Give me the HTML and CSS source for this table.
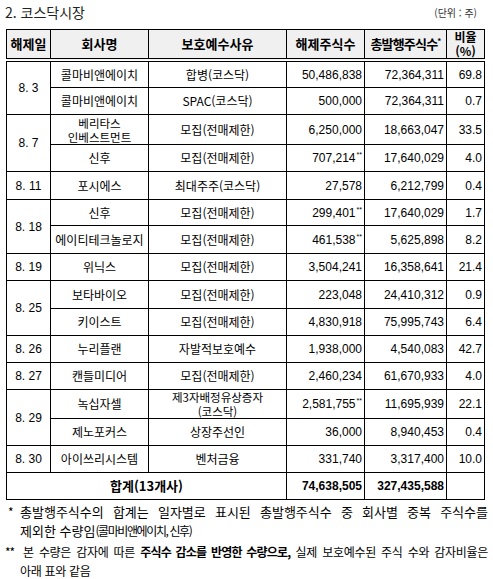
FILE: index.html
```html
<!DOCTYPE html>
<html lang="ko">
<head>
<meta charset="utf-8">
<title>코스닥시장</title>
<link rel="stylesheet" href="styles.css">
</head>
<body>
<div class="page">
  <div class="top">
    <div class="title">2. 코스닥시장</div>
    <div class="unit">(단위 : 주)</div>
  </div>
  <table class="grid">
    <colgroup>
      <col class="c1"><col class="c2"><col class="c3"><col class="c4"><col class="c5"><col class="c6">
    </colgroup>
    <thead>
      <tr class="hrow">
        <th>해제일</th>
        <th>회사명</th>
        <th>보호예수사유</th>
        <th>해제주식수</th>
        <th class="narrow">총발행주식수<sup class="star">*</sup></th>
        <th class="two"><span class="ln">비율</span><span class="ln">(%)</span></th>
      </tr>
    </thead>
    <tbody>
      <tr class="h26">
        <td class="date" rowspan="2">8. 3</td>
        <td class="kr">콜마비앤에이치</td>
        <td class="kr">합병(코스닥)</td>
        <td class="num">50,486,838</td>
        <td class="num">72,364,311</td>
        <td class="num">69.8</td>
      </tr>
      <tr class="h27">
        <td class="kr">콜마비앤에이치</td>
        <td class="kr">SPAC(코스닥)</td>
        <td class="num">500,000</td>
        <td class="num">72,364,311</td>
        <td class="num">0.7</td>
      </tr>
      <tr class="h30">
        <td class="date" rowspan="2">8. 7</td>
        <td class="kr two"><span class="ln">베리타스</span><span class="ln">인베스트먼트</span></td>
        <td class="kr">모집(전매제한)</td>
        <td class="num">6,250,000</td>
        <td class="num">18,663,047</td>
        <td class="num">33.5</td>
      </tr>
      <tr class="h27">
        <td class="kr">신후</td>
        <td class="kr">모집(전매제한)</td>
        <td class="num">707,214<sup class="ast">**</sup></td>
        <td class="num">17,640,029</td>
        <td class="num">4.0</td>
      </tr>
      <tr class="h28">
        <td class="date">8. 11</td>
        <td class="kr">포시에스</td>
        <td class="kr">최대주주(코스닥)</td>
        <td class="num">27,578</td>
        <td class="num">6,212,799</td>
        <td class="num">0.4</td>
      </tr>
      <tr class="h26">
        <td class="date" rowspan="2">8. 18</td>
        <td class="kr">신후</td>
        <td class="kr">모집(전매제한)</td>
        <td class="num">299,401<sup class="ast">**</sup></td>
        <td class="num">17,640,029</td>
        <td class="num">1.7</td>
      </tr>
      <tr class="h28">
        <td class="kr">에이티테크놀로지</td>
        <td class="kr">모집(전매제한)</td>
        <td class="num">461,538<sup class="ast">**</sup></td>
        <td class="num">5,625,898</td>
        <td class="num">8.2</td>
      </tr>
      <tr class="h27">
        <td class="date">8. 19</td>
        <td class="kr">위닉스</td>
        <td class="kr">모집(전매제한)</td>
        <td class="num">3,504,241</td>
        <td class="num">16,358,641</td>
        <td class="num">21.4</td>
      </tr>
      <tr class="h28">
        <td class="date" rowspan="2">8. 25</td>
        <td class="kr">보타바이오</td>
        <td class="kr">모집(전매제한)</td>
        <td class="num">223,048</td>
        <td class="num">24,410,312</td>
        <td class="num">0.9</td>
      </tr>
      <tr class="h27">
        <td class="kr">키이스트</td>
        <td class="kr">모집(전매제한)</td>
        <td class="num">4,830,918</td>
        <td class="num">75,995,743</td>
        <td class="num">6.4</td>
      </tr>
      <tr class="h27">
        <td class="date">8. 26</td>
        <td class="kr">누리플랜</td>
        <td class="kr">자발적보호예수</td>
        <td class="num">1,938,000</td>
        <td class="num">4,540,083</td>
        <td class="num">42.7</td>
      </tr>
      <tr class="h27">
        <td class="date">8. 27</td>
        <td class="kr">캔들미디어</td>
        <td class="kr">모집(전매제한)</td>
        <td class="num">2,460,234</td>
        <td class="num">61,670,933</td>
        <td class="num">4.0</td>
      </tr>
      <tr class="h28">
        <td class="date" rowspan="2">8. 29</td>
        <td class="kr">녹십자셀</td>
        <td class="kr two"><span class="ln">제3자배정유상증자</span><span class="ln">(코스닥)</span></td>
        <td class="num">2,581,755<sup class="ast">**</sup></td>
        <td class="num">11,695,939</td>
        <td class="num">22.1</td>
      </tr>
      <tr class="h27">
        <td class="kr">제노포커스</td>
        <td class="kr">상장주선인</td>
        <td class="num">36,000</td>
        <td class="num">8,940,453</td>
        <td class="num">0.4</td>
      </tr>
      <tr class="h27">
        <td class="date">8. 30</td>
        <td class="kr">아이쓰리시스템</td>
        <td class="kr">벤처금융</td>
        <td class="num">331,740</td>
        <td class="num">3,317,400</td>
        <td class="num">10.0</td>
      </tr>
      <tr class="h27 total">
        <td class="sum" colspan="3">합계(13개사)</td>
        <td class="num bold">74,638,505</td>
        <td class="num bold">327,435,588</td>
        <td></td>
      </tr>
    </tbody>
  </table>
  <div class="notes">
    <div class="note">
      <span class="mark">*</span>
      <span class="line just">총발행주식수의 합계는 일자별로 표시된 총발행주식수 중 회사별 중복 주식수를</span>
    </div>
    <div class="note cont">제외한 수량임<span class="tight">(콜마비앤에이치, 신후)</span></div>
    <div class="note second">
      <span class="mark2">**</span>
      <span class="line small just">본 수량은 감자에 따른 <b class="em">주식수 감소를 반영한 수량으로,</b> 실제 보호예수된 주식 수와 감자비율은</span>
    </div>
    <div class="note cont small">아래 표와 같음</div>
  </div>
</div>
</body>
</html>
```

FILE: styles.css
```css
html, body {
  margin: 0;
  padding: 0;
  background: #ffffff;
}

body {
  font-family: "Noto Sans CJK KR", "Liberation Sans", sans-serif;
  color: #000000;
}

.page {
  width: 493px;
}

.top {
  display: flex;
  justify-content: space-between;
  align-items: center;
  height: 29px;
  padding: 0 16px 0 5px;
  box-sizing: border-box;
}

.title {
  font-size: 14px;
  line-height: 20px;
  color: #222222;
  margin-top: -6px;
}

.unit {
  font-size: 10px;
  line-height: 14px;
  color: #333333;
  margin-top: -4px;
}

.grid {
  margin-left: 6px;
  border-collapse: collapse;
  table-layout: fixed;
  width: 479px;
  font-size: 12px;
}

.c1 { width: 44px; }
.c2 { width: 98px; }
.c3 { width: 138px; }
.c4 { width: 78px; }
.c5 { width: 82px; }
.c6 { width: 38px; }

.grid th,
.grid td {
  border: 1px solid #000000;
  padding: 0 2px;
  line-height: 14px;
  white-space: nowrap;
  overflow: visible;
}

.grid th {
  background: #f0f0f0;
  font-weight: 700;
  font-size: 13px;
  height: 27px;
  text-align: center;
  border-bottom: 4px double #000000;
}

.grid th.narrow {
  letter-spacing: -0.8px;
  padding: 0 1px;
}

.ln {
  display: block;
}

.grid th.two .ln {
  font-size: 12px;
  line-height: 14px;
  height: 14px;
}

.star {
  font-size: 8px;
  vertical-align: 5px;
  line-height: 0;
}

.hrow { height: 28px; }
.h26 td { height: 25px; }
.h27 td { height: 26px; }
.h28 td { height: 27px; }
.h30 td { height: 29px; }

.kr {
  text-align: center;
  padding: 0 1px;
}

.kr.two .ln {
  font-size: 11.5px;
  line-height: 14px;
  height: 14px;
}

.date {
  text-align: center;
  font-family: "Liberation Sans", sans-serif;
  font-size: 12px;
}

.num {
  text-align: right;
  font-family: "Liberation Sans", sans-serif;
  font-size: 12px;
}

.grid td.num {
  padding: 0 2px 0 0;
}

.ast {
  font-size: 7px;
  vertical-align: 5px;
  line-height: 0;
  margin-left: 1px;
}

.bold {
  font-weight: 700;
}

.sum {
  text-align: center;
  font-weight: 700;
  font-size: 13px;
}

.notes {
  padding-top: 2px;
  font-size: 13px;
}

.note {
  display: flex;
  align-items: center;
  height: 19px;
  white-space: nowrap;
}

.mark {
  width: 12px;
  padding-left: 8px;
  flex: none;
  font-size: 12px;
}

.mark2 {
  width: 18px;
  padding-left: 5px;
  flex: none;
  font-size: 12px;
  letter-spacing: -1px;
}

.line {
  flex: 1;
  padding-right: 5px;
}

.just {
  text-align: justify;
  text-align-last: justify;
}

.cont {
  padding-left: 20px;
}

.tight {
  font-size: 12px;
  letter-spacing: -1.4px;
}

.second {
  margin-top: 2px;
}

.small {
  font-size: 12px;
  letter-spacing: -0.3px;
}

.em {
  font-weight: 700;
  letter-spacing: -0.8px;
}
```
